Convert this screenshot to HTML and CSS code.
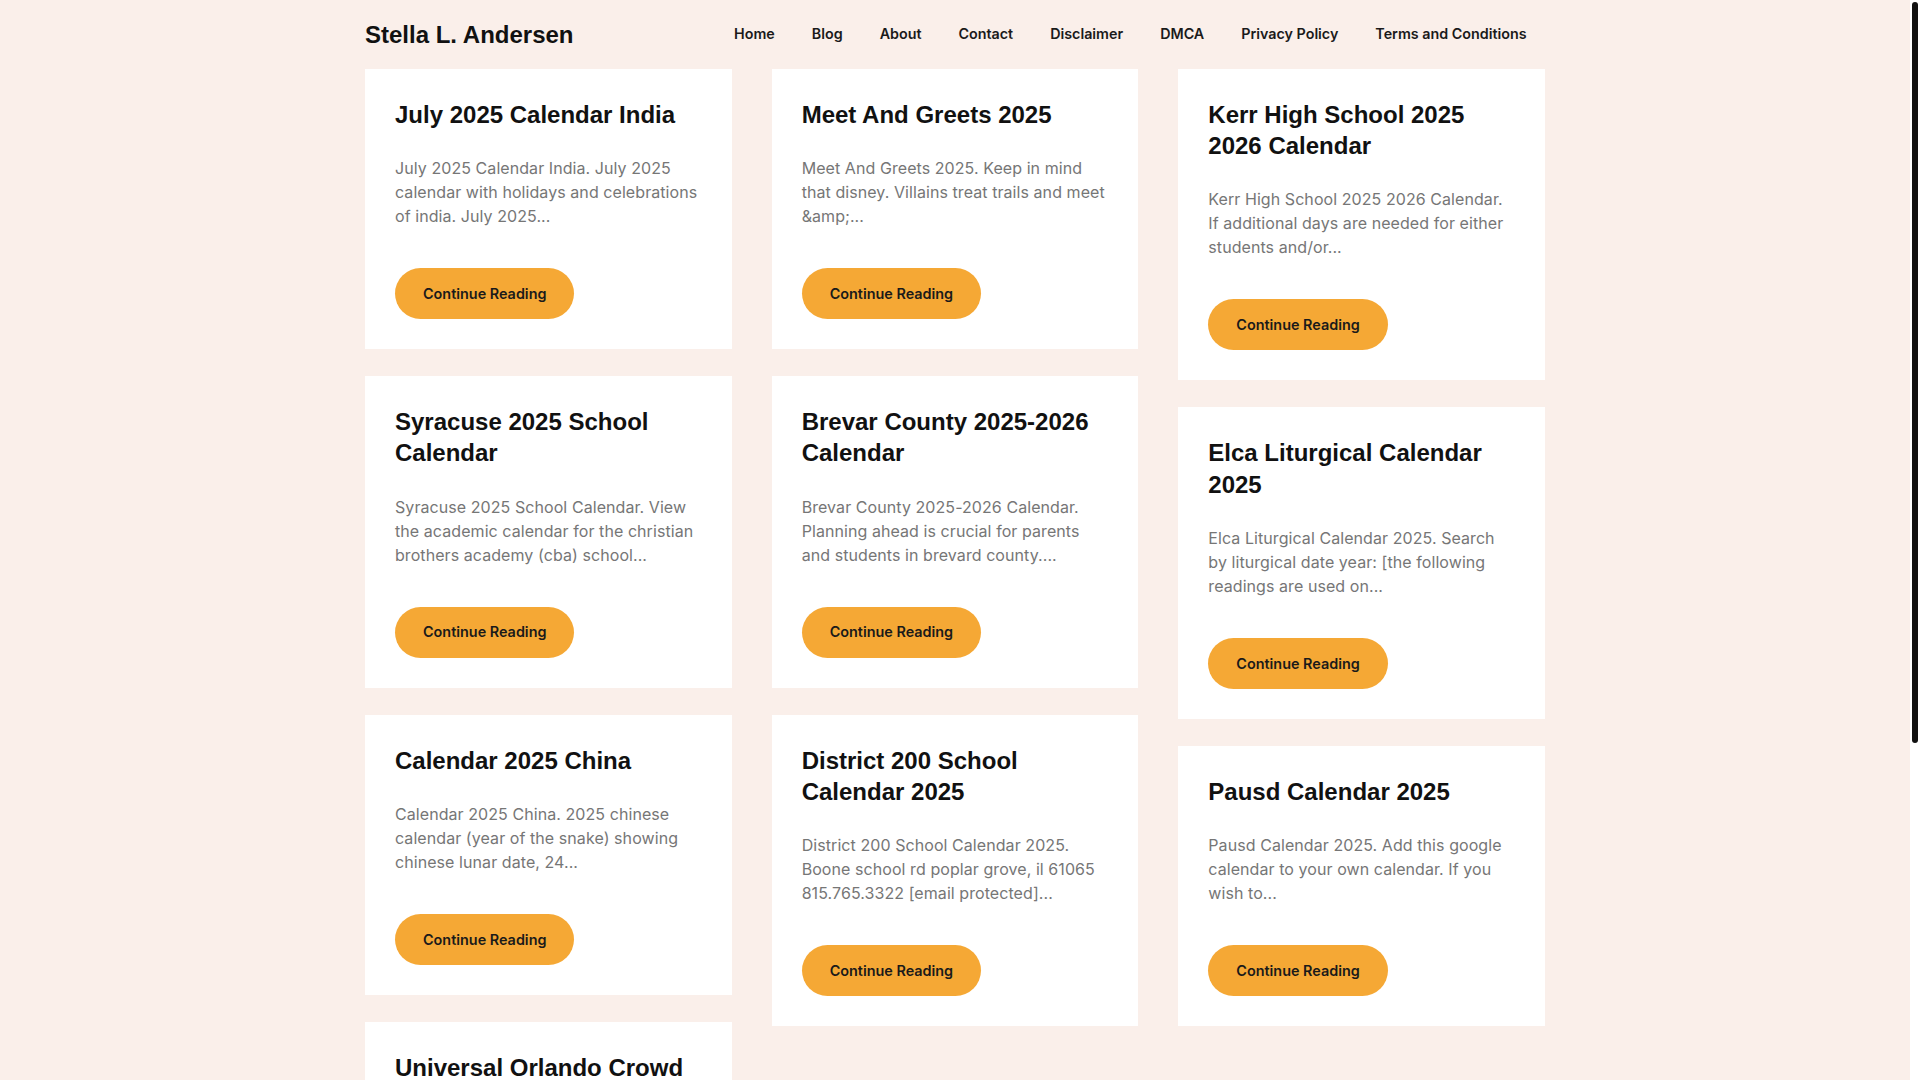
FILE: index.html
```html
<!DOCTYPE html>
<html lang="en">
<head>
<meta charset="utf-8">
<title>Stella L. Andersen</title>
<link rel="stylesheet" href="styles.css">
</head>
<body>
<div class="page-wrap">
<header class="site-header">
  <div class="container header-inner">
    <a class="site-title" href="#">Stella L. Andersen</a>
    <nav class="main-nav">
      <a href="#">Home</a>
      <a href="#">Blog</a>
      <a href="#">About</a>
      <a href="#">Contact</a>
      <a href="#">Disclaimer</a>
      <a href="#">DMCA</a>
      <a href="#">Privacy Policy</a>
      <a href="#">Terms and Conditions</a>
    </nav>
  </div>
</header>

<main class="container posts">
  <div class="column">
    <article class="card">
      <h2 class="card-title">July 2025 Calendar India</h2>
      <p class="card-excerpt">July 2025 Calendar India. July 2025 calendar with holidays and celebrations of india. July 2025...</p>
      <a class="btn" href="#">Continue Reading</a>
    </article>
    <article class="card">
      <h2 class="card-title">Syracuse 2025 School Calendar</h2>
      <p class="card-excerpt">Syracuse 2025 School Calendar. View the academic calendar for the christian brothers academy (cba) school...</p>
      <a class="btn" href="#">Continue Reading</a>
    </article>
    <article class="card">
      <h2 class="card-title">Calendar 2025 China</h2>
      <p class="card-excerpt">Calendar 2025 China. 2025 chinese calendar (year of the snake) showing chinese lunar date, 24...</p>
      <a class="btn" href="#">Continue Reading</a>
    </article>
    <article class="card">
      <h2 class="card-title">Universal Orlando Crowd Calendar 2025</h2>
      <p class="card-excerpt">Universal Orlando Crowd Calendar 2025. Plan your visit with the best days to go and the expected crowd levels...</p>
      <a class="btn" href="#">Continue Reading</a>
    </article>
  </div>
  <div class="column">
    <article class="card">
      <h2 class="card-title">Meet And Greets 2025</h2>
      <p class="card-excerpt">Meet And Greets 2025. Keep in mind that disney. Villains treat trails and meet &amp;amp;...</p>
      <a class="btn" href="#">Continue Reading</a>
    </article>
    <article class="card">
      <h2 class="card-title">Brevar County 2025-2026 Calendar</h2>
      <p class="card-excerpt">Brevar County 2025-2026 Calendar. Planning ahead is crucial for parents and students in brevard county....</p>
      <a class="btn" href="#">Continue Reading</a>
    </article>
    <article class="card">
      <h2 class="card-title">District 200 School Calendar 2025</h2>
      <p class="card-excerpt">District 200 School Calendar 2025. Boone school rd poplar grove, il 61065 815.765.3322 [email&#160;protected]...</p>
      <a class="btn" href="#">Continue Reading</a>
    </article>
  </div>
  <div class="column">
    <article class="card">
      <h2 class="card-title">Kerr High School 2025 2026 Calendar</h2>
      <p class="card-excerpt">Kerr High School 2025 2026 Calendar. If additional days are needed for either students and/or...</p>
      <a class="btn" href="#">Continue Reading</a>
    </article>
    <article class="card">
      <h2 class="card-title">Elca Liturgical Calendar 2025</h2>
      <p class="card-excerpt">Elca Liturgical Calendar 2025. Search by liturgical date year: [the following readings are used on...</p>
      <a class="btn" href="#">Continue Reading</a>
    </article>
    <article class="card">
      <h2 class="card-title">Pausd Calendar 2025</h2>
      <p class="card-excerpt">Pausd Calendar 2025. Add this google calendar to your own calendar. If you wish to...</p>
      <a class="btn" href="#">Continue Reading</a>
    </article>
  </div>
</main>

<nav class="container pagination">
  <span class="page current">1</span>
  <a class="page" href="#">2</a>
  <a class="page" href="#">3</a>
  <a class="page" href="#">Next</a>
</nav>

<footer class="site-footer">
  <div class="container">© 2025 Stella L. Andersen</div>
</footer>
</div>

<div class="scrollbar" aria-hidden="true"><div class="scrollbar-thumb"></div></div>
</body>
</html>
```

FILE: styles.css
```css
* {
  box-sizing: border-box;
}

body {
  margin: 0;
  background: #faefea;
  color: #111;
  font-family: Inter, "Noto Sans", sans-serif;
  font-size: 16px;
  line-height: 1.5;
}

.page-wrap {
  margin-right: 10px;
}

a {
  color: inherit;
  text-decoration: none;
}

.container {
  width: 1180px;
  margin: 0 auto;
}

/* scrollbar strip on the right edge of the window */
.scrollbar {
  position: fixed;
  top: 0;
  right: 0;
  width: 10px;
  height: 100vh;
  background: #ffffff;
  padding: 2px 2px 0;
}

.scrollbar-thumb {
  width: 6px;
  height: 741px;
  background: #111111;
  border-radius: 3px;
}

.site-header {
  height: 69px;
}

.header-inner {
  height: 100%;
  display: flex;
  align-items: center;
  justify-content: space-between;
}

.site-title {
  font-family: "Liberation Sans", Arial, sans-serif;
  font-weight: 700;
  font-size: 24px;
  line-height: 1;
  color: #111;
}

.main-nav {
  display: flex;
  align-items: center;
  margin-top: -2px;
}

.main-nav a {
  padding: 0 18.5px;
  font-family: Inter, sans-serif;
  font-weight: 600;
  font-size: 14.3px;
  color: #1a1a1a;
}

.main-nav a:first-child {
  padding-left: 21px;
}

.posts {
  display: grid;
  grid-template-columns: repeat(3, 1fr);
  column-gap: 40px;
  align-items: start;
}

.column {
  display: flex;
  flex-direction: column;
  gap: 27px;
}

.card {
  background: #ffffff;
  padding: 30px;
}

.card-title {
  margin: 0 0 26px;
  font-family: "Liberation Sans", Arial, sans-serif;
  font-weight: 700;
  font-size: 24px;
  line-height: 31.2px;
  color: #111;
}

.card-excerpt {
  margin: 0 0 40px;
  font-size: 16px;
  line-height: 24px;
  letter-spacing: 0.07px;
  color: #767676;
}

.btn {
  display: inline-flex;
  align-items: center;
  height: 51px;
  padding: 0 28px;
  border-radius: 26px;
  background: #f5a835;
  font-family: Inter, sans-serif;
  font-weight: 600;
  font-size: 14.4px;
  color: #1a1a1a;
}

.pagination {
  display: flex;
  gap: 10px;
  padding: 50px 0;
}

.page {
  padding: 8px 14px;
  background: #fff;
  font-weight: 600;
}

.page.current {
  background: #f5a835;
}

.site-footer {
  padding: 40px 0 60px;
  font-size: 14px;
  color: #555;
}
```
